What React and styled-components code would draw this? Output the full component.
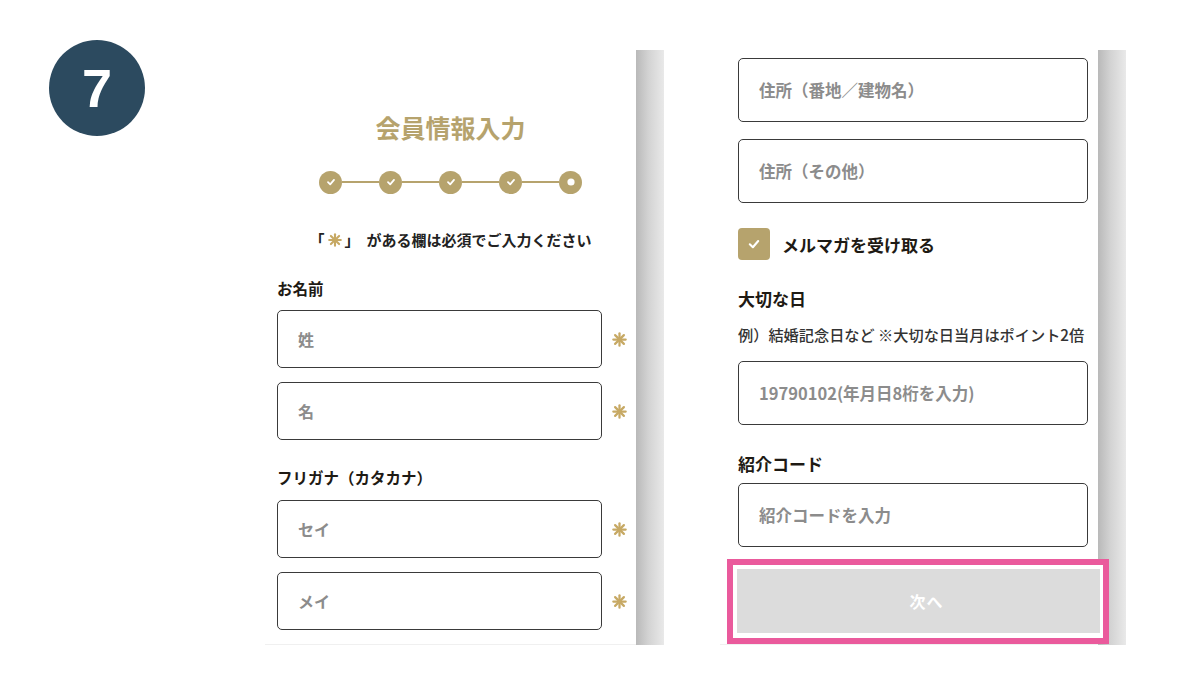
import React from 'react';
import styled, { createGlobalStyle } from 'styled-components';

const GlobalStyle = createGlobalStyle`
  html, body {
    margin: 0;
    padding: 0;
    background: #fff;
    overflow: hidden;
  }
  body {
    font-family: "Noto Sans CJK JP", "Noto Sans", sans-serif;
    color: #222;
  }
`;

const GOLD = '#b6a36d';
const STAR = '#c7a964';

const Page = styled.div`
  width: 1200px;
  height: 675px;
  display: flex;
  align-items: flex-start;
  padding: 40px 0 0 49px;
  box-sizing: border-box;
`;

const Badge = styled.div`
  width: 96px;
  height: 96px;
  border-radius: 50%;
  background: #2c4a5f;
  color: #fff;
  display: flex;
  align-items: center;
  justify-content: center;
  font-family: "Liberation Sans", Arial, sans-serif;
  font-weight: 700;
  font-size: 54px;
  flex: 0 0 auto;
`;

const Screen = styled.div`
  display: flex;
  margin-top: 10px;
  margin-left: ${(p) => p.$offset}px;
  height: 595px;
`;

const Body = styled.div`
  width: ${(p) => p.$width}px;
  padding: ${(p) => p.$pad};
  box-sizing: border-box;
  background: #fff;
  display: flex;
  flex-direction: column;
  border-bottom: 1px solid #f0f0f0;
`;

const Shade = styled.div`
  width: 28px;
  background: linear-gradient(to right, #b9b9b9 0%, #d3d3d3 45%, #e9e9e9 100%);
`;

const Title = styled.h1`
  margin: 0;
  text-align: center;
  color: ${GOLD};
  font-size: 25px;
  line-height: 30px;
  font-weight: 700;
  padding-right: 12px;
`;

const Steps = styled.div`
  display: flex;
  align-items: center;
  justify-content: center;
  margin-top: 28px;
  height: 24px;
  padding-right: 12px;
`;

const Dot = styled.div`
  width: 23px;
  height: 23px;
  border-radius: 50%;
  background: ${GOLD};
  display: flex;
  align-items: center;
  justify-content: center;
  flex: 0 0 auto;
`;

const Line = styled.div`
  width: 37px;
  height: 2px;
  background: ${GOLD};
`;

const Required = styled.p`
  margin: 36px 0 0;
  font-size: 15px;
  line-height: 20px;
  font-weight: 700;
  color: #222;
  padding-right: 12px;
  display: flex;
  align-items: center;
  justify-content: center;
  white-space: nowrap;
`;

const StarSlot = styled.span`
  display: inline-flex;
  margin: 0 3px;
`;

const Label = styled.div`
  margin-top: ${(p) => p.$mt}px;
  font-size: ${(p) => p.$size}px;
  line-height: 22px;
  font-weight: 700;
  color: #1e1a14;
`;

const Row = styled.div`
  display: flex;
  align-items: center;
  margin-top: ${(p) => p.$mt}px;
`;

const Field = styled.div`
  box-sizing: border-box;
  width: ${(p) => p.$width}px;
  height: ${(p) => p.$height}px;
  border: 1.5px solid #3a3a3a;
  border-radius: 5px;
  display: flex;
  align-items: center;
  padding-left: 20px;
  font-size: ${(p) => p.$size || 16}px;
  font-weight: 700;
  color: #8c8c8c;
  margin-top: ${(p) => p.$mt || 0}px;
  flex: 0 0 auto;
`;

const Star = styled.div`
  width: 34px;
  display: flex;
  justify-content: center;
`;

const CheckRow = styled.div`
  display: flex;
  align-items: center;
  gap: 12px;
  margin-top: 25px;
`;

const CheckBox = styled.div`
  width: 32px;
  height: 32px;
  border-radius: 4px;
  background: ${GOLD};
  display: flex;
  align-items: center;
  justify-content: center;
`;

const CheckText = styled.span`
  font-size: 17px;
  font-weight: 700;
  color: #1e1a14;
`;

const Hint = styled.div`
  margin-top: 14px;
  font-size: 15.2px;
  line-height: 20px;
  font-weight: 500;
  color: #333;
  white-space: nowrap;
`;

const Highlight = styled.div`
  position: relative;
  z-index: 2;
  margin: 12px 0 0 -11px;
  width: 382px;
  height: 88px;
  box-sizing: border-box;
  border: 6px solid #ea5a9c;
  padding: 4px 3px 5px 4px;
  background: #fff;
`;

const NextButton = styled.button`
  width: 100%;
  height: 100%;
  border: none;
  background: #dcdcdc;
  color: #fff;
  font-family: inherit;
  font-size: 16px;
  font-weight: 700;
  letter-spacing: 1px;
  padding: 0 0 0 16px;
`;

const Asterisk = ({ size = 15 }) => (
  <svg width={size} height={size} viewBox="0 0 14 14">
    <g stroke={STAR} strokeWidth="2.1" strokeLinecap="round">
      <line x1="7" y1="1.2" x2="7" y2="12.8" />
      <line x1="1.2" y1="7" x2="12.8" y2="7" />
      <line x1="2.9" y1="2.9" x2="11.1" y2="11.1" />
      <line x1="11.1" y1="2.9" x2="2.9" y2="11.1" />
    </g>
  </svg>
);

const Tick = ({ size = 10, width = 1.8 }) => (
  <svg width={size} height={size} viewBox="0 0 10 10">
    <path d="M2 5.2 L4.2 7.3 L8 2.9" fill="none" stroke="#fff" strokeWidth={width} strokeLinecap="round" strokeLinejoin="round" />
  </svg>
);

const StepDots = () => {
  const items = [];
  for (let i = 0; i < 5; i++) {
    if (i > 0) items.push(<Line key={'l' + i} />);
    items.push(
      <Dot key={'d' + i}>
        {i < 4 ? (
          <Tick />
        ) : (
          <svg width="10" height="10" viewBox="0 0 10 10">
            <circle cx="5" cy="5" r="3.6" fill="#fff" />
          </svg>
        )}
      </Dot>
    );
  }
  return <Steps>{items}</Steps>;
};

const RequiredField = ({ text, mt }) => (
  <Row $mt={mt}>
    <Field $width={325} $height={58}>{text}</Field>
    <Star>
      <Asterisk />
    </Star>
  </Row>
);

export default function App() {
  return (
    <>
      <GlobalStyle />
      <Page>
        <Badge>7</Badge>

        <Screen $offset={120}>
          <Body $width={371} $pad="62px 0 0 12px">
            <Title>会員情報入力</Title>
            <StepDots />
            <Required>
              「<StarSlot><Asterisk size={14} /></StarSlot>」&nbsp;&nbsp;がある欄は必須でご入力ください
            </Required>
            <Label $mt={27} $size={15.5}>お名前</Label>
            <RequiredField text="姓" mt={11} />
            <RequiredField text="名" mt={14} />
            <Label $mt={26} $size={15.5}>フリガナ（カタカナ）</Label>
            <RequiredField text="セイ" mt={12} />
            <RequiredField text="メイ" mt={14} />
          </Body>
          <Shade />
        </Screen>

        <Screen $offset={56}>
          <Body $width={378} $pad="8px 0 0 18px">
            <Field $width={350} $height={64} $size={16.5}>住所（番地／建物名）</Field>
            <Field $width={350} $height={64} $size={16.5} $mt={17}>住所（その他）</Field>
            <CheckRow>
              <CheckBox>
                <Tick size={14} width={1.5} />
              </CheckBox>
              <CheckText>メルマガを受け取る</CheckText>
            </CheckRow>
            <Label $mt={28} $size={17}>大切な日</Label>
            <Hint>例）結婚記念日など ※大切な日当月はポイント2倍</Hint>
            <Field $width={350} $height={64} $size={16.5} $mt={17}>19790102(年月日8桁を入力)</Field>
            <Label $mt={28} $size={17}>紹介コード</Label>
            <Field $width={350} $height={64} $size={16.5} $mt={8}>紹介コードを入力</Field>
            <Highlight>
              <NextButton>次へ</NextButton>
            </Highlight>
          </Body>
          <Shade />
        </Screen>
      </Page>
    </>
  );
}
